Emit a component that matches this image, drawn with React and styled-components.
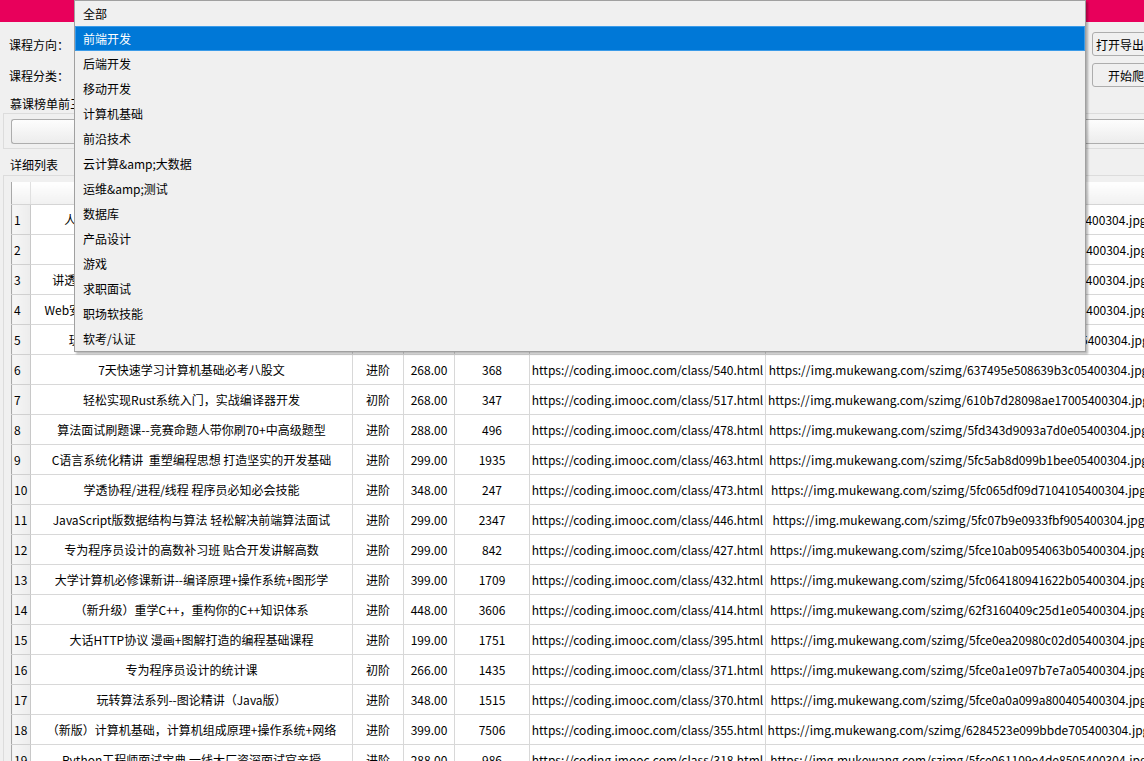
import React from "react";
import styled, { createGlobalStyle } from "styled-components";

const Global = createGlobalStyle`
  html, body {
    margin: 0;
    padding: 0;
    background: #f0f0f0;
    overflow: hidden;
  }
  body {
    font-family: "Noto Sans CJK SC", "Noto Sans", sans-serif;
    font-size: 12px;
    color: #000;
  }
`;

const Window = styled.div`
  position: relative;
  width: 1181px;
  height: 761px;
  overflow: hidden;
`;

const TitleBar = styled.div`
  height: 22px;
  background: #e8005b;
`;

const Form = styled.div`
  display: flex;
  flex-direction: column;
  gap: 7px;
  padding: 10px 9px 0 9px;
`;

const FormRow = styled.div`
  display: flex;
  align-items: center;
  height: 24px;
`;

const Label = styled.div`
  width: 65px;
  flex: none;
  white-space: nowrap;
`;

const Combo = styled.div`
  flex: 1;
  height: 100%;
  box-sizing: border-box;
  border: 1px solid #adadad;
  background: #e5e5e5;
`;

const Button = styled.div`
  width: 80px;
  flex: none;
  margin-left: 6px;
  height: 100%;
  box-sizing: border-box;
  border: 1px solid #adadad;
  border-radius: 3px;
  background: #f0f0f0;
  display: flex;
  align-items: center;
  justify-content: center;
  white-space: nowrap;
  overflow: hidden;
`;

const SectionTitle = styled.div`
  padding-left: 10px;
  height: 16px;
  line-height: 16px;
  white-space: nowrap;
  margin-top: ${(p) => p.top}px;
`;

const Frame = styled.div`
  margin-left: 3px;
  margin-top: ${(p) => p.top}px;
  border: 1px solid #dcdcdc;
  border-right: none;
  padding: ${(p) => p.pad};
`;

const RankBox = styled.div`
  height: 25px;
  box-sizing: border-box;
  border: 1px solid #adadad;
  border-right: none;
  border-radius: 3px 0 0 3px;
  background: linear-gradient(#fdfdfd, #ececec);
`;

const Table = styled.table`
  border-collapse: collapse;
  table-layout: fixed;
  background: #fff;
  border-left: 1px solid #a8a8a8;
`;

const Head = styled.th`
  height: 22px;
  padding: 0;
  font-weight: normal;
  background: linear-gradient(#ffffff, #f1f1f1);
  border-right: 1px solid #e0e0e0;
  border-bottom: 1px solid #d5d5d5;
  white-space: nowrap;
  overflow: hidden;
`;

const RowHead = styled.td`
  height: 29px;
  padding: 0 0 0 2px;
  background: linear-gradient(90deg, #f7f7f7, #ececec);
  border-right: 1px solid #c8c8c8;
  border-bottom: 1px solid #d0d0d0;
  text-align: left;
`;

const Cell = styled.td`
  height: 29px;
  padding: 0;
  border-right: 1px solid #d8d8d8;
  border-bottom: 1px solid #d8d8d8;
  text-align: center;
  white-space: pre;
  overflow: hidden;
`;

const Popup = styled.div`
  position: absolute;
  left: 74px;
  top: 0;
  width: 1012px;
  height: 352px;
  box-sizing: border-box;
  border: 1px solid #a0a0a0;
  background: #f0f0f0;
  box-shadow: 2px 2px 2px rgba(0, 0, 0, 0.28);
  display: flex;
  flex-direction: column;
`;

const Item = styled.div`
  height: 25px;
  flex: none;
  box-sizing: border-box;
  display: flex;
  align-items: center;
  white-space: nowrap;
  background: ${(p) => (p.active ? "#0078d7" : "transparent")};
  color: ${(p) => (p.active ? "#fff" : "#000")};
  border: 1px solid ${(p) => (p.active ? "#3b9be8" : "transparent")};
  padding: 0 0 1px 7px;
`;

const categories = [
  "全部",
  "前端开发",
  "后端开发",
  "移动开发",
  "计算机基础",
  "前沿技术",
  "云计算&amp;大数据",
  "运维&amp;测试",
  "数据库",
  "产品设计",
  "游戏",
  "求职面试",
  "职场软技能",
  "软考/认证",
];

const rows = [
  ["人人都能学会的数据结构与算法课 轻松突破面试", "进阶", "388.00", "1264", "551", "6396fa2a0948a5ca05400304"],
  ["计算机网络通关 面试必备知识", "进阶", "299.00", "812", "548", "638e9f2a09b8e8a905400304"],
  ["讲透计算机组成原理与操作系统 全面夯实计算机基础", "进阶", "348.00", "2041", "545", "6380c3e1093b8fe405400304"],
  ["Web安全攻防实战 从入门到精通 全面掌握核心漏洞挖掘", "进阶", "399.00", "538", "542", "637c9f0a09d5e1b405400304"],
  ["玩转数据结构 从入门到进阶 名企算法面试必备", "初阶", "299.00", "3107", "541", "6376d8e8091c3ad405400304"],
  ["7天快速学习计算机基础必考八股文", "进阶", "268.00", "368", "540", "637495e508639b3c05400304"],
  ["轻松实现Rust系统入门，实战编译器开发", "初阶", "268.00", "347", "517", "610b7d28098ae17005400304"],
  ["算法面试刷题课--竞赛命题人带你刷70+中高级题型", "进阶", "288.00", "496", "478", "5fd343d9093a7d0e05400304"],
  ["C语言系统化精讲  重塑编程思想 打造坚实的开发基础", "进阶", "299.00", "1935", "463", "5fc5ab8d099b1bee05400304"],
  ["学透协程/进程/线程 程序员必知必会技能", "进阶", "348.00", "247", "473", "5fc065df09d7104105400304"],
  ["JavaScript版数据结构与算法 轻松解决前端算法面试", "进阶", "299.00", "2347", "446", "5fc07b9e0933fbf905400304"],
  ["专为程序员设计的高数补习班 贴合开发讲解高数", "进阶", "299.00", "842", "427", "5fce10ab0954063b05400304"],
  ["大学计算机必修课新讲--编译原理+操作系统+图形学", "进阶", "399.00", "1709", "432", "5fc064180941622b05400304"],
  ["（新升级）重学C++，重构你的C++知识体系", "进阶", "448.00", "3606", "414", "62f3160409c25d1e05400304"],
  ["大话HTTP协议 漫画+图解打造的编程基础课程", "进阶", "199.00", "1751", "395", "5fce0ea20980c02d05400304"],
  ["专为程序员设计的统计课", "初阶", "266.00", "1435", "371", "5fce0a1e097b7e7a05400304"],
  ["玩转算法系列--图论精讲（Java版）", "进阶", "348.00", "1515", "370", "5fce0a0a099a800405400304"],
  ["（新版）计算机基础，计算机组成原理+操作系统+网络", "进阶", "399.00", "7506", "355", "6284523e099bbde705400304"],
  ["Python工程师面试宝典 一线大厂资深面试官亲授", "进阶", "288.00", "986", "318", "5fce061109e4de8505400304"],
];

const widths = [19, 322, 51, 51, 75, 236, 386];
const headers = ["", "课程名称", "难度", "价格", "学习人数", "课程链接", "图片链接"];

export default function App() {
  return (
    <Window>
      <Global />
      <TitleBar />
      <Form>
        <FormRow>
          <Label>课程方向：</Label>
          <Combo />
          <Button>打开导出目录</Button>
        </FormRow>
        <FormRow>
          <Label>课程分类：</Label>
          <Combo />
          <Button>开始爬取</Button>
        </FormRow>
      </Form>
      <SectionTitle top={9}>慕课榜单前三名：</SectionTitle>
      <Frame top={1} pad="5px 0 4px 7px">
        <RankBox />
      </Frame>
      <SectionTitle top={8}>详细列表</SectionTitle>
      <Frame top={2} pad="6px 0 0 7px">
        <Table>
          <colgroup>
            {widths.map((w, i) => (
              <col key={i} style={{ width: w }} />
            ))}
          </colgroup>
          <thead>
            <tr>
              {headers.map((h, i) => (
                <Head key={i}>{h}</Head>
              ))}
            </tr>
          </thead>
          <tbody>
            {rows.map((r, i) => (
              <tr key={i}>
                <RowHead>{i + 1}</RowHead>
                <Cell>{r[0]}</Cell>
                <Cell>{r[1]}</Cell>
                <Cell>{r[2]}</Cell>
                <Cell>{r[3]}</Cell>
                <Cell>{`https://coding.imooc.com/class/${r[4]}.html`}</Cell>
                <Cell>{`https://img.mukewang.com/szimg/${r[5]}.jpg`}</Cell>
              </tr>
            ))}
          </tbody>
        </Table>
      </Frame>
      <Popup>
        {categories.map((c, i) => (
          <Item key={c} active={i === 1}>
            {c}
          </Item>
        ))}
      </Popup>
    </Window>
  );
}
